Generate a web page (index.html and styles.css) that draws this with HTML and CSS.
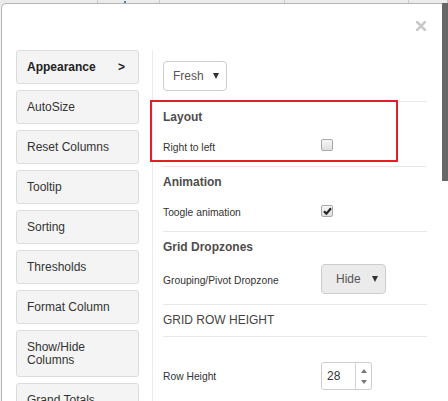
FILE: index.html
```html
<!DOCTYPE html>
<html>
<head>
<meta charset="utf-8">
<link rel="stylesheet" href="styles.css">
</head>
<body>
<div class="page">
  <div class="grid-head">
    <div class="gcell gcell-a"></div>
    <div class="gcell gcell-b"><span class="gmark"></span></div>
    <div class="gcell gcell-c"></div>
    <div class="gcell gcell-d"></div>
    <div class="gcell gcell-e"></div>
  </div>
</div>

<div class="modal">
  <div class="modal-header">
    <span class="close">
      <svg width="10" height="10" viewBox="0 0 10 10"><path d="M1 1 L9 9 M9 1 L1 9" stroke="#c9c9c9" stroke-width="2.6" stroke-linecap="square"/></svg>
    </span>
  </div>
  <div class="modal-body">
    <nav class="side">
      <div class="nav-btn nav-active"><span>Appearance</span><span class="chev">&gt;</span></div>
      <div class="nav-btn">AutoSize</div>
      <div class="nav-btn">Reset Columns</div>
      <div class="nav-btn">Tooltip</div>
      <div class="nav-btn">Sorting</div>
      <div class="nav-btn">Thresholds</div>
      <div class="nav-btn">Format Column</div>
      <div class="nav-btn nav-tall">Show/Hide<br>Columns</div>
      <div class="nav-btn">Grand Totals</div>
    </nav>
    <div class="content">
      <div class="theme-row">
        <div class="select select-theme"><span>Fresh</span><span class="caret"></span></div>
      </div>
      <section class="sec">
        <h4 class="sec-title">Layout</h4>
        <div class="row">
          <span class="label">Right to left</span>
          <span class="cb"></span>
        </div>
      </section>
      <section class="sec">
        <h4 class="sec-title">Animation</h4>
        <div class="row">
          <span class="label">Toogle animation</span>
          <span class="cb cb-on">
            <svg width="9" height="8" viewBox="0 0 9 8"><path d="M1 4.2 L3.4 6.6 L8 1.2" fill="none" stroke="#222" stroke-width="2.2"/></svg>
          </span>
        </div>
      </section>
      <section class="sec sec-drop">
        <h4 class="sec-title">Grid Dropzones</h4>
        <div class="row row-select">
          <span class="label">Grouping/Pivot Dropzone</span>
          <div class="select select-hide"><span>Hide</span><span class="caret"></span></div>
        </div>
      </section>
      <section class="sec sec-head-only">
        <h4 class="sec-title sec-caps">GRID ROW HEIGHT</h4>
      </section>
      <section class="sec sec-rowheight">
        <div class="row">
          <span class="label">Row Height</span>
          <div class="spin">
            <span class="spin-val">28</span>
            <span class="spin-btns">
              <span class="spin-up"></span>
              <span class="spin-down"></span>
            </span>
          </div>
        </div>
      </section>
    </div>
  </div>
</div>

<div class="highlight"></div>
<div class="scroll-thumb"></div>
</body>
</html>
```

FILE: styles.css
```css
* { box-sizing: border-box; }
html, body {
  margin: 0;
  padding: 0;
  width: 448px;
  height: 401px;
  overflow: hidden;
}
body {
  position: relative;
  background: #ececec;
  font-family: "Liberation Sans", Arial, sans-serif;
  color: #333;
}

/* background page behind the modal */
.page {
  height: 401px;
  background: #f3f3f3;
}
.grid-head {
  display: flex;
  height: 6px;
  background: #ebebeb;
}
.gcell { height: 6px; border-right: 1px solid #c8c8c8; }
.gcell-a { width: 101px; }
.gcell-b { width: 64px; position: relative; }
.gcell-c { width: 128px; }
.gcell-d { width: 128px; }
.gcell-e { width: 40px; }
.gmark {
  position: absolute;
  left: 26px;
  top: 1px;
  width: 2px;
  height: 2px;
  background: #5a78a8;
}

/* modal */
.modal {
  position: absolute;
  left: 1px;
  top: 3px;
  width: 470px;
  height: 420px;
  background: #fff;
  border: 1px solid #b5b5b5;
  border-radius: 5px;
}
.modal-header {
  height: 46px;
  position: relative;
}
.close {
  position: absolute;
  left: 414px;
  top: 17px;
  width: 10px;
  height: 10px;
  display: block;
}
.close svg { display: block; }

.modal-body {
  display: flex;
  align-items: flex-start;
  padding-left: 14px;
}

.side {
  width: 123px;
  margin-right: 13px;
  display: flex;
  flex-direction: column;
  gap: 6px;
}
.nav-btn {
  height: 34px;
  display: flex;
  align-items: center;
  justify-content: space-between;
  padding: 0 13px 0 10px;
  background: #f4f4f4;
  border: 1px solid #dcdcdc;
  border-radius: 3px;
  font-size: 12px;
  color: #333;
  line-height: 14px;
}
.nav-active { font-weight: bold; color: #222; }
.chev { font-weight: bold; }
.nav-tall {
  height: 47px;
  display: block;
  padding-top: 10px;
  line-height: 13px;
}

.content {
  width: 275px;
  padding: 11px 0 0 10px;
  border-left: 1px solid #ececec;
  height: 360px;
}

.theme-row { padding-bottom: 10px; }

.select {
  display: flex;
  align-items: center;
  justify-content: space-between;
  height: 30px;
  border: 1px solid #cdcdcd;
  border-radius: 4px;
  font-size: 12px;
  color: #555;
}
.select-theme {
  width: 64px;
  padding: 0 7px 0 9px;
  background: #fff;
}
.select-hide {
  width: 65px;
  padding: 0 7px 0 14px;
  background: #ebebeb;
  margin-top: 2px;
}
.caret {
  width: 0;
  height: 0;
  border-left: 3px solid transparent;
  border-right: 3px solid transparent;
  border-top: 6px solid #333;
  margin-top: -1px;
}

.sec {
  border-top: 1px solid #e9e9e9;
  padding-bottom: 6px;
}
.sec-title {
  margin: 0;
  height: 30px;
  line-height: 31px;
  font-size: 12px;
  font-weight: bold;
  color: #4d4d4d;
}
.sec-caps { font-weight: normal; font-size: 12px; color: #444; }
.row {
  display: flex;
  align-items: center;
  height: 28px;
}
.label {
  width: 158px;
  font-size: 10.3px;
  color: #333;
  padding-top: 3px;
}
.row-select { height: 32px; }
.row-select .label { padding-top: 4px; }
.sec-drop { padding-bottom: 10px; }
.sec-head-only { padding-bottom: 1px; }
.sec-rowheight { padding-top: 25px; }
.sec-rowheight .label { padding-top: 1px; }

.cb {
  width: 12px;
  height: 12px;
  border: 1px solid #a9a9a9;
  border-radius: 2px;
  background: linear-gradient(#f7f7f7, #dedede);
  display: flex;
  align-items: center;
  justify-content: center;
  margin-top: -2px;
}
.cb-on { margin-top: -1px; }
.cb svg { display: block; }

.spin {
  display: flex;
  width: 51px;
  height: 28px;
  border: 1px solid #cdcdcd;
  border-radius: 3px;
  background: #fff;
}
.spin-val {
  width: 33px;
  padding-left: 5px;
  font-size: 12px;
  line-height: 27px;
  color: #333;
}
.spin-btns {
  flex: 1;
  border-left: 1px solid #d5d5d5;
  display: flex;
  flex-direction: column;
  align-items: center;
  justify-content: center;
  gap: 7px;
}
.spin-up, .spin-down {
  width: 0;
  height: 0;
  border-left: 3.5px solid transparent;
  border-right: 3.5px solid transparent;
}
.spin-up { border-bottom: 4px solid #777; }
.spin-down { border-top: 4px solid #777; }

/* red annotation overlay */
.highlight {
  position: absolute;
  left: 150px;
  top: 100px;
  width: 248px;
  height: 62px;
  border: 2px solid #e0202a;
}

.scroll-thumb {
  position: absolute;
  left: 442px;
  top: 3px;
  width: 6px;
  height: 178px;
  background: #676767;
}
```
